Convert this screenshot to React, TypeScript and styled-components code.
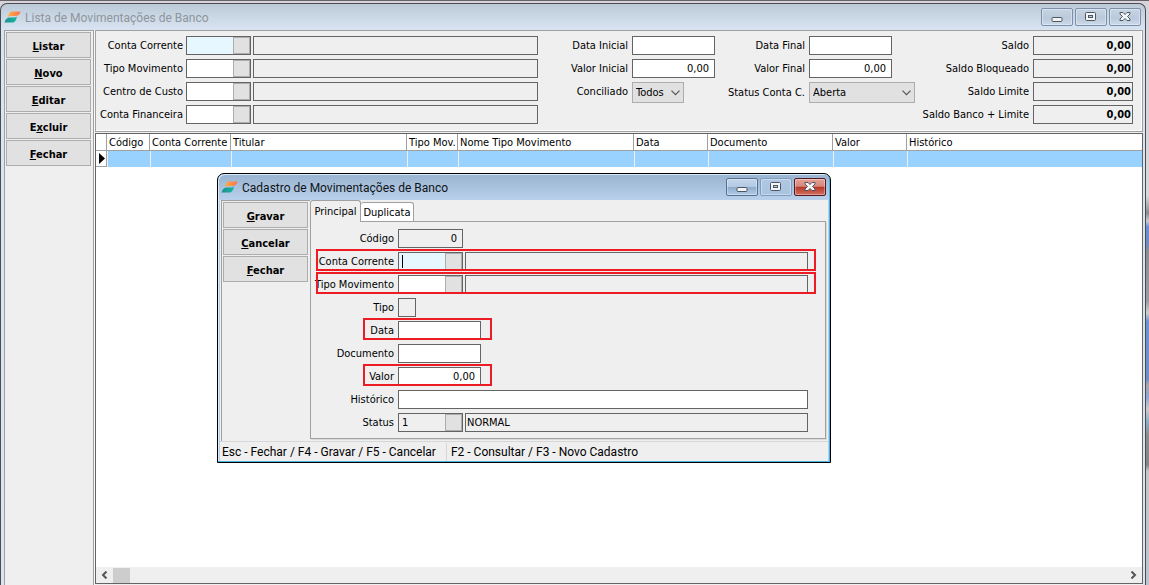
import React from 'react';
import styled, { createGlobalStyle, css } from 'styled-components';

const uiFont = '"DejaVu Sans Condensed", "DejaVu Sans", sans-serif';
const captionFont = 'Roboto, "Open Sans", sans-serif';

const GlobalStyle = createGlobalStyle`
  *, *::before, *::after { box-sizing: border-box; }
  body {
    margin: 0;
    overflow: hidden;
    background: #efefef;
    color: #000;
    font: 11px/14px ${uiFont};
  }
  button, input, select { font: inherit; color: inherit; margin: 0; }
`;

const Desktop = styled.div`
  position: relative;
  display: flex;
  height: 100vh;
  padding: 3px 3px 0 0;
  border-top: 1px solid #67626a;
  background: linear-gradient(
    180deg,
    #d9d3da 0, #d9d7da 195px, #8b8b8d 212px, #c9cbd2 220px, #6d8fd0 226px, #6d8bc8 242px,
    #8d8d94 250px, #9b9ba2 300px, #d0cfcd 312px, #6f93d0 320px, #6d8fc6 378px, #a9a5aa 384px,
    #8ca5d4 396px, #cfc9c7 408px, #8ab0cc 420px, #8d8d8d 434px, #858585 464px, #c6c6c6 470px, #bcc4cf 585px
  );
`;

const MainWindow = styled.main`
  display: flex;
  flex-direction: column;
  flex: 1;
  min-width: 0;
  margin-top: -1px;
  padding: 0 2px 0 3px;
  border: 1px solid #4d4c52;
  border-bottom: 0;
  border-radius: 7px 7px 0 0;
  background: linear-gradient(#bccad8 0, #d8e4f1 26px, #dae5f1 100%);
`;

const TitleBar = styled.header<{ $active?: boolean }>`
  display: flex;
  align-items: center;
  flex: none;
  gap: 4px;
  height: 26px;
  padding-left: ${p => (p.$active ? 1 : 0)}px;
  color: ${p => (p.$active ? '#101418' : '#8f959c')};
  font: 12px/16px ${captionFont};
`;

const Title = styled.h1`
  flex: 1;
  margin: 0;
  padding-top: 2px;
  font: inherit;
`;

const CaptionButtons = styled.div`
  display: flex;
  gap: 2px;
  padding-right: 2px;
`;

const tones = {
  plain: css`
    border-color: #7d90ab;
    background: linear-gradient(#c6d4e3 0, #bccbdb 50%, #b9c8da 50%, #cbd9e8 100%);
  `,
  active: css`
    border-color: #57708f;
    background: linear-gradient(#c2d5ea 0, #b4cae3 48%, #8fabcb 52%, #b3cce6 100%);
  `,
  faded: css`
    border-color: #809cc0;
    background: linear-gradient(#b0c8e2, #a9c3e0);
  `,
  close: css`
    border-color: #561b22;
    background: linear-gradient(#e5a196 0, #d7877b 46%, #b7372a 50%, #d0705c 100%);
  `,
};

const CaptionButton = styled.button<{ $tone: keyof typeof tones }>`
  display: grid;
  place-items: center;
  width: 32px;
  height: 18px;
  padding: 0;
  border: 1px solid;
  border-radius: 2px;
  box-shadow: inset 0 0 0 1px rgba(255, 255, 255, 0.35);
  ${p => tones[p.$tone]}
`;

const Body = styled.div`
  display: flex;
  flex: 1;
  min-height: 0;
  gap: 1px;
  background: #fafafa;
`;

const ActionPanel = styled.nav<{ $joined?: boolean }>`
  display: flex;
  flex-direction: column;
  flex: none;
  gap: 1px;
  width: ${p => (p.$joined ? 89 : 90)}px;
  padding: 1px 2px 0 1px;
  border: 1px solid #a0a0a0;
  border-right-width: ${p => (p.$joined ? 0 : 1)}px;
  border-bottom: 0;
  background: #efefef;
`;

const ActionButton = styled.button`
  height: 26px;
  padding: 3px 0 0;
  border: 1px solid #adadad;
  background: #e1e1e1;
  font-weight: bold;
`;

const Content = styled.div`
  display: flex;
  flex-direction: column;
  flex: 1;
  min-width: 0;
  gap: 1px;
  padding-bottom: 1px;
  background: #efefef;
`;

const FilterPanel = styled.section`
  display: flex;
  align-items: flex-start;
  padding: 5px 9px 7px 0;
  border: 1px solid #a0a0a0;
  box-shadow: inset -1px -1px 0 #fff;
`;

const FieldGroup = styled.div<{ $grow?: boolean; $before?: number }>`
  display: flex;
  flex-direction: column;
  flex: ${p => (p.$grow ? '1' : 'none')};
  min-width: 0;
  gap: 4px;
  margin-left: ${p => p.$before ?? 0}px;
`;

const Row = styled.div`
  position: relative;
  display: flex;
  gap: 2px;
  min-height: 19px;
`;

const Label = styled.label<{ $width: number; $gap?: number; $middle?: boolean }>`
  flex: none;
  align-self: ${p => (p.$middle ? 'center' : 'flex-start')};
  width: ${p => p.$width}px;
  margin-right: ${p => p.$gap ?? 2}px;
  line-height: 19px;
  text-align: right;
  white-space: nowrap;
`;

const TextBox = styled.input<{ $width?: number; $right?: boolean; $flat?: boolean; $bold?: boolean }>`
  flex: ${p => (p.$width ? 'none' : '1')};
  width: ${p => (p.$width ? `${p.$width}px` : 'auto')};
  min-width: 0;
  height: 19px;
  padding: 0 ${p => (p.$right && !p.$bold ? 5 : 1)}px;
  border: 1px solid #646464;
  border-radius: 0;
  outline: 0;
  background: ${p => (p.$flat ? '#efefef' : '#fff')};
  font-weight: ${p => (p.$bold ? 'bold' : 'normal')};
  text-align: ${p => (p.$right ? 'right' : 'left')};
`;

const LookupBox = styled.div<{ $flat?: boolean; $current?: boolean }>`
  display: flex;
  flex: none;
  width: 65px;
  height: 19px;
  border: 1px solid #646464;
  background: ${p => (p.$flat ? '#efefef' : p.$current ? '#e6f7ff' : '#fff')};
`;

const Caret = styled.span`
  flex: none;
  width: 1px;
  height: 13px;
  margin: 2px 0 0 3px;
  background: #000;
`;

const LookupInput = styled.input`
  flex: 1;
  min-width: 0;
  padding: 0 3px;
  border: 0;
  outline: 0;
  background: transparent;
`;

const LookupButton = styled.button`
  width: 17px;
  padding: 0;
  border: 1px solid #adadad;
  background: #e1e1e1;
`;

const SelectBox = styled.div<{ $width: number }>`
  display: grid;
  align-items: center;
  width: ${p => p.$width}px;
  height: 21px;
  & > * { grid-area: 1 / 1; }
  & > svg { justify-self: end; margin-right: 4px; pointer-events: none; }
`;

const Select = styled.select`
  width: 100%;
  height: 21px;
  padding: 1px 3px 0;
  border: 1px solid #adadad;
  border-radius: 0;
  appearance: none;
  background: #e1e1e1;
`;

const GridBox = styled.section`
  display: flex;
  flex-direction: column;
  flex: 1;
  min-height: 0;
  border: 1px solid #646464;
  background: #fff;
`;

const DataTable = styled.table`
  width: 100%;
  table-layout: fixed;
  border-spacing: 0;
`;

const HeadCell = styled.th`
  height: 17px;
  padding: 2px 0 0 2px;
  overflow: hidden;
  border-right: 1px solid #a0a0a0;
  border-bottom: 1px solid #a0a0a0;
  font-weight: normal;
  text-align: left;
  white-space: nowrap;
  &:last-child { border-right: 0; }
`;

const BodyCell = styled.td`
  height: 16px;
  padding: 0;
  border-left: 1px solid #efefef;
  background: #99d1ff;
`;

const MarkerCell = styled.td`
  height: 16px;
  padding: 0 0 0 3px;
  border-right: 1px solid #a0a0a0;
  border-bottom: 1px solid #a0a0a0;
  line-height: 0;
`;

const ScrollTrack = styled.div`
  display: flex;
  align-items: center;
  height: 16px;
  margin-top: auto;
  background: #efefef;
`;

const ScrollArrow = styled.button`
  display: grid;
  place-items: center;
  width: 17px;
  height: 16px;
  padding: 0;
  border: 0;
  background: none;
`;

const ScrollThumb = styled.div`
  width: 17px;
  height: 15px;
  margin-right: auto;
  background: #cdcdcd;
`;

const DialogWindow = styled.div`
  position: absolute;
  top: 172px;
  left: 217px;
  display: flex;
  flex-direction: column;
  width: 614px;
  padding: 0 2px 1px;
  border: 1px solid #000;
  border-radius: 7px 7px 0 0;
  background: linear-gradient(#98b3d0 0, #b9d0ea 26px, #b9d0ea 100%);
  box-shadow: inset -1px -1px 0 #46b6e0, inset 1px 1px 0 #dcebf8;
`;

const DialogBody = styled.div`
  display: flex;
  padding-left: 1px;
  background: #efefef;
`;

const Tabs = styled.section`
  display: flex;
  flex-direction: column;
  flex: 1;
  padding: 0 2px 2px 0;
`;

const TabList = styled.div`
  display: flex;
  align-items: flex-end;
  height: 21px;
`;

const Tab = styled.button<{ $selected?: boolean }>`
  position: relative;
  height: ${p => (p.$selected ? 22 : 19)}px;
  width: ${p => (p.$selected ? 51 : 53)}px;
  margin-bottom: ${p => (p.$selected ? -1 : 0)}px;
  padding: ${p => (p.$selected ? 0 : 1)}px 0 0;
  border: 1px solid #a0a0a0;
  border-bottom: 0;
  border-left-width: ${p => (p.$selected ? 1 : 0)}px;
  border-radius: 3px 3px 0 0;
  background: ${p => (p.$selected ? '#efefef' : '#fff')};
  white-space: nowrap;
`;

const TabPage = styled.form`
  display: flex;
  flex-direction: column;
  gap: 4px;
  padding: 7px 17px 6px 0;
  border: 1px solid #a0a0a0;
  box-shadow: 1px 1px 0 #dadada;
`;

const RequiredMark = styled.span<{ $left: number; $width?: number }>`
  position: absolute;
  top: -3px;
  bottom: 0;
  left: ${p => p.$left}px;
  ${p => (p.$width ? `width: ${p.$width}px;` : 'right: -8px;')}
  border: 2px solid #ed1c24;
  pointer-events: none;
`;

const StatusBar = styled.footer`
  display: flex;
  align-items: center;
  height: 20px;
  border-top: 1px solid #d7d7d7;
  background: #efefef;
  font: 12px/18px ${captionFont};
`;

const StatusText = styled.span`
  padding: 0 10px 0 2px;
  white-space: nowrap;
  & + & { padding-left: 4px; border-left: 1px solid #d7d7d7; }
`;

const Logo = () => (
  <svg width="17" height="14" viewBox="0 0 17 14" aria-hidden="true">
    <defs>
      <linearGradient id="warm" x1="0" x2="1"><stop stopColor="#ffb03a" /><stop offset="1" stopColor="#ff6f55" /></linearGradient>
      <linearGradient id="cool" x1="0" x2="1"><stop stopColor="#1f8f8c" /><stop offset="1" stopColor="#12b8a4" /></linearGradient>
    </defs>
    <path d="M4 7C5 3 6 1.500 9 1.500H16.500C15.500 5 14 6 11 6H8C6 6 5 6.300 4 7Z" fill="url(#warm)" />
    <path d="M0.500 12.500C1.500 9 3 7.500 6 7.500H9C11 7.500 12 7.200 13 6.500C12 10.500 11 12.500 8 12.500Z" fill="url(#cool)" />
  </svg>
);

const glyphFrame = { stroke: '#4c5563', fill: '#f4f4f4' };

const MinimizeGlyph = () => (
  <svg width="12" height="12" viewBox="0 0 12 12" aria-hidden="true">
    <rect x="1" y="6.500" width="10" height="4" rx="1" {...glyphFrame} />
  </svg>
);

const RestoreGlyph = () => (
  <svg width="12" height="12" viewBox="0 0 12 12" aria-hidden="true">
    <rect x="0.500" y="1.500" width="10" height="8" rx="1" {...glyphFrame} />
    <rect x="3.500" y="4.500" width="4" height="2" stroke="#4c5563" fill="#b8cadd" />
  </svg>
);

const CloseGlyph = () => (
  <svg width="12" height="12" viewBox="0 0 12 12" aria-hidden="true">
    <path
      d="M1 1.500H4L6 3.500L8 1.500H11V3L8.500 5.500L11 8V9.500H8L6 7.500L4 9.500H1V8L3.500 5.500L1 3Z"
      {...glyphFrame}
      strokeLinejoin="round"
    />
  </svg>
);

const Chevron = () => (
  <svg width="9" height="6" viewBox="0 0 9 6" aria-hidden="true">
    <path d="M0.500 0.700L4.500 4.700L8.500 0.700" fill="none" stroke="#555" strokeWidth="1.200" />
  </svg>
);

const ScrollChevron = ({ right }: { right?: boolean }) => (
  <svg width="7" height="8" viewBox="0 0 7 8" aria-hidden="true">
    <path d={right ? 'M1.500 0.500L5 4L1.500 7.500' : 'M5.500 0.500L2 4L5.500 7.500'} fill="none" stroke="#555" strokeWidth="2" />
  </svg>
);

const WindowCaption = ({ title, active }: { title: string; active?: boolean }) => (
  <TitleBar $active={active}>
    <Logo />
    <Title>{title}</Title>
    <CaptionButtons>
      <CaptionButton type="button" aria-label="Minimizar" $tone={active ? 'active' : 'plain'}><MinimizeGlyph /></CaptionButton>
      <CaptionButton type="button" aria-label="Restaurar" $tone={active ? 'faded' : 'plain'}><RestoreGlyph /></CaptionButton>
      <CaptionButton type="button" aria-label="Fechar janela" $tone={active ? 'close' : 'plain'}><CloseGlyph /></CaptionButton>
    </CaptionButtons>
  </TitleBar>
);

const Action = ({ text, hot = 0 }: { text: string; hot?: number }) => (
  <ActionButton type="button">
    {text.slice(0, hot)}<u>{text[hot]}</u>{text.slice(hot + 1)}
  </ActionButton>
);

type LookupProps = { id: string; label: string; code?: string; name?: string; current?: boolean; flat?: boolean; caret?: boolean };

const Lookup = ({ id, label, code = '', name = '', current, flat, caret }: LookupProps) => (
  <>
    <LookupBox $current={current} $flat={flat}>
      {caret && <Caret />}
      <LookupInput id={id} defaultValue={code} readOnly={flat} />
      <LookupButton type="button" aria-label={`Consultar ${label}`} />
    </LookupBox>
    <TextBox $flat readOnly value={name} aria-label={`Descrição ${label}`} />
  </>
);

const filters = [
  { id: 'f-conta', label: 'Conta Corrente', current: true },
  { id: 'f-tipo', label: 'Tipo Movimento' },
  { id: 'f-centro', label: 'Centro de Custo' },
  { id: 'f-financeira', label: 'Conta Financeira' },
];

const balances = ['Saldo', 'Saldo Bloqueado', 'Saldo Limite', 'Saldo Banco + Limite'];

const columns: [string, number?][] = [
  ['Código', 43], ['Conta Corrente', 81], ['Titular', 176], ['Tipo Mov.', 51], ['Nome Tipo Movimento', 176],
  ['Data', 74], ['Documento', 125], ['Valor', 74], ['Histórico'],
];

const Filters = () => (
  <FilterPanel>
    <FieldGroup $grow>
      {filters.map(f => (
        <Row key={f.id}>
          <Label htmlFor={f.id} $width={87} $gap={1}>{f.label}</Label>
          <Lookup {...f} />
        </Row>
      ))}
    </FieldGroup>
    <FieldGroup $before={20}>
      <Row><Label htmlFor="data-ini" $width={70}>Data Inicial</Label><TextBox id="data-ini" $width={83} /></Row>
      <Row><Label htmlFor="valor-ini" $width={70}>Valor Inicial</Label><TextBox id="valor-ini" $width={83} $right defaultValue="0,00" /></Row>
      <Row>
        <Label htmlFor="conciliado" $width={70}>Conciliado</Label>
        <SelectBox $width={52}>
          <Select id="conciliado"><option>Todos</option></Select>
          <Chevron />
        </SelectBox>
      </Row>
    </FieldGroup>
    <FieldGroup $before={12}>
      <Row><Label htmlFor="data-fim" $width={78}>Data Final</Label><TextBox id="data-fim" $width={83} /></Row>
      <Row><Label htmlFor="valor-fim" $width={78}>Valor Final</Label><TextBox id="valor-fim" $width={83} $right defaultValue="0,00" /></Row>
      <Row>
        <Label htmlFor="status-conta" $width={78} $middle>Status Conta C.</Label>
        <SelectBox $width={106}>
          <Select id="status-conta"><option>Aberta</option></Select>
          <Chevron />
        </SelectBox>
      </Row>
    </FieldGroup>
    <FieldGroup $before={7}>
      {balances.map((name, i) => (
        <Row key={name}>
          <Label htmlFor={`saldo-${i}`} $width={107}>{name}</Label>
          <TextBox id={`saldo-${i}`} $width={100} $flat $right $bold readOnly value="0,00" />
        </Row>
      ))}
    </FieldGroup>
  </FilterPanel>
);

const Movements = () => (
  <GridBox>
    <DataTable>
      <colgroup>
        <col width={11} />
        {columns.map(([name, width]) => <col key={name} width={width} />)}
      </colgroup>
      <thead>
        <tr>
          <HeadCell aria-label="Registro atual" />
          {columns.map(([name]) => <HeadCell key={name} scope="col">{name}</HeadCell>)}
        </tr>
      </thead>
      <tbody>
        <tr>
          <MarkerCell>
            <svg width="6" height="11" viewBox="0 0 6 11" aria-hidden="true"><path d="M0 0L6 5.500L0 11Z" /></svg>
          </MarkerCell>
          {columns.map(([name]) => <BodyCell key={name} />)}
        </tr>
      </tbody>
    </DataTable>
    <ScrollTrack>
      <ScrollArrow type="button" aria-label="Rolar para a esquerda"><ScrollChevron /></ScrollArrow>
      <ScrollThumb />
      <ScrollArrow type="button" aria-label="Rolar para a direita"><ScrollChevron right /></ScrollArrow>
    </ScrollTrack>
  </GridBox>
);

const EntryForm = () => (
  <TabPage>
    <Row><Label htmlFor="codigo" $width={83}>Código</Label><TextBox id="codigo" $width={65} $flat $right readOnly value="0" /></Row>
    <Row>
      <Label htmlFor="conta" $width={83}>Conta Corrente</Label>
      <Lookup id="conta" label="Conta Corrente" current caret />
      <RequiredMark $left={5} />
    </Row>
    <Row>
      <Label htmlFor="tipo-mov" $width={83}>Tipo Movimento</Label>
      <Lookup id="tipo-mov" label="Tipo Movimento" />
      <RequiredMark $left={5} />
    </Row>
    <Row><Label htmlFor="tipo" $width={83}>Tipo</Label><TextBox id="tipo" $width={18} $flat readOnly /></Row>
    <Row>
      <Label htmlFor="data" $width={83}>Data</Label><TextBox id="data" $width={83} />
      <RequiredMark $left={52} $width={129} />
    </Row>
    <Row><Label htmlFor="documento" $width={83}>Documento</Label><TextBox id="documento" $width={83} /></Row>
    <Row>
      <Label htmlFor="valor" $width={83}>Valor</Label><TextBox id="valor" $width={83} $right defaultValue="0,00" />
      <RequiredMark $left={52} $width={129} />
    </Row>
    <Row><Label htmlFor="historico" $width={83}>Histórico</Label><TextBox id="historico" /></Row>
    <Row><Label htmlFor="status" $width={83}>Status</Label><Lookup id="status" label="Status" code="1" name="NORMAL" flat /></Row>
  </TabPage>
);

export default function App() {
  return (
    <Desktop>
      <GlobalStyle />
      <MainWindow>
        <WindowCaption title="Lista de Movimentações de Banco" />
        <Body>
          <ActionPanel>
            <Action text="Listar" />
            <Action text="Novo" />
            <Action text="Editar" />
            <Action text="Excluir" hot={1} />
            <Action text="Fechar" />
          </ActionPanel>
          <Content>
            <Filters />
            <Movements />
          </Content>
        </Body>
      </MainWindow>
      <DialogWindow role="dialog" aria-label="Cadastro de Movimentações de Banco">
        <WindowCaption title="Cadastro de Movimentações de Banco" active />
        <DialogBody>
          <ActionPanel $joined>
            <Action text="Gravar" />
            <Action text="Cancelar" />
            <Action text="Fechar" />
          </ActionPanel>
          <Tabs>
            <TabList role="tablist">
              <Tab type="button" role="tab" aria-selected="true" $selected>Principal</Tab>
              <Tab type="button" role="tab" aria-selected="false">Duplicata</Tab>
            </TabList>
            <EntryForm />
          </Tabs>
        </DialogBody>
        <StatusBar>
          <StatusText>Esc - Fechar / F4 - Gravar / F5 - Cancelar</StatusText>
          <StatusText>F2 - Consultar / F3 - Novo Cadastro</StatusText>
        </StatusBar>
      </DialogWindow>
    </Desktop>
  );
}
